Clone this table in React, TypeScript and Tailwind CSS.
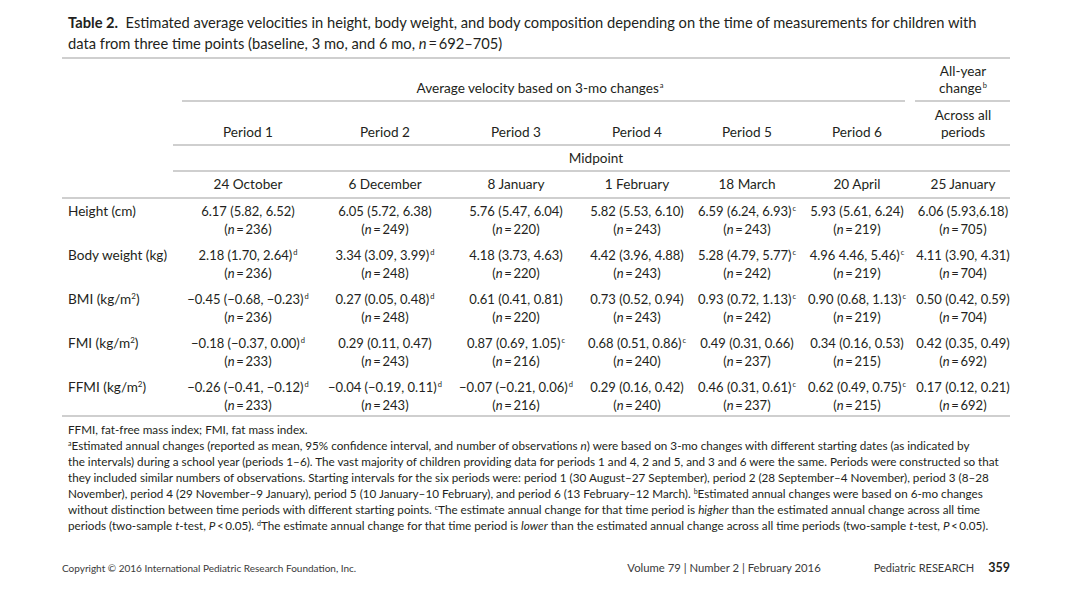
import React from "react";

const cols = "grid grid-cols-[118px_136px_138px_124px_118px_102px_118px_94px]";

type Cell = { v: string; s?: string; n: string };

const rows: { label: React.ReactNode; cells: Cell[] }[] = [
  {
    label: "Height (cm)",
    cells: [
      { v: "6.17 (5.82, 6.52)", n: "236" },
      { v: "6.05 (5.72, 6.38)", n: "249" },
      { v: "5.76 (5.47, 6.04)", n: "220" },
      { v: "5.82 (5.53, 6.10)", n: "243" },
      { v: "6.59 (6.24, 6.93)", s: "c", n: "243" },
      { v: "5.93 (5.61, 6.24)", n: "219" },
      { v: "6.06 (5.93,6.18)", n: "705" },
    ],
  },
  {
    label: "Body weight (kg)",
    cells: [
      { v: "2.18 (1.70, 2.64)", s: "d", n: "236" },
      { v: "3.34 (3.09, 3.99)", s: "d", n: "248" },
      { v: "4.18 (3.73, 4.63)", n: "220" },
      { v: "4.42 (3.96, 4.88)", n: "243" },
      { v: "5.28 (4.79, 5.77)", s: "c", n: "242" },
      { v: "4.96 4.46, 5.46)", s: "c", n: "219" },
      { v: "4.11 (3.90, 4.31)", n: "704" },
    ],
  },
  {
    label: (
      <>
        BMI (kg/m<sup className="text-[8px] relative -top-[5px]">2</sup>)
      </>
    ),
    cells: [
      { v: "\u22120.45 (\u22120.68, \u22120.23)", s: "d", n: "236" },
      { v: "0.27 (0.05, 0.48)", s: "d", n: "248" },
      { v: "0.61 (0.41, 0.81)", n: "220" },
      { v: "0.73 (0.52, 0.94)", n: "243" },
      { v: "0.93 (0.72, 1.13)", s: "c", n: "242" },
      { v: "0.90 (0.68, 1.13)", s: "c", n: "219" },
      { v: "0.50 (0.42, 0.59)", n: "704" },
    ],
  },
  {
    label: (
      <>
        FMI (kg/m<sup className="text-[8px] relative -top-[5px]">2</sup>)
      </>
    ),
    cells: [
      { v: "\u22120.18 (\u22120.37, 0.00)", s: "d", n: "233" },
      { v: "0.29 (0.11, 0.47)", n: "243" },
      { v: "0.87 (0.69, 1.05)", s: "c", n: "216" },
      { v: "0.68 (0.51, 0.86)", s: "c", n: "240" },
      { v: "0.49 (0.31, 0.66)", n: "237" },
      { v: "0.34 (0.16, 0.53)", n: "215" },
      { v: "0.42 (0.35, 0.49)", n: "692" },
    ],
  },
  {
    label: (
      <>
        FFMI (kg/m<sup className="text-[8px] relative -top-[5px]">2</sup>)
      </>
    ),
    cells: [
      { v: "\u22120.26 (\u22120.41, \u22120.12)", s: "d", n: "233" },
      { v: "\u22120.04 (\u22120.19, 0.11)", s: "d", n: "243" },
      { v: "\u22120.07 (\u22120.21, 0.06)", s: "d", n: "216" },
      { v: "0.29 (0.16, 0.42)", n: "240" },
      { v: "0.46 (0.31, 0.61)", s: "c", n: "237" },
      { v: "0.62 (0.49, 0.75)", s: "c", n: "215" },
      { v: "0.17 (0.12, 0.21)", n: "692" },
    ],
  },
];

const Rule = ({ className = "" }: { className?: string }) => (
  <div className={"h-[2px] bg-[#cfcfcf] " + className} />
);

const Sup = ({ children }: { children: React.ReactNode }) => (
  <sup className="text-[7.5px] relative -top-[5px] ml-[1px]">{children}</sup>
);

const FSup = ({ children }: { children: React.ReactNode }) => (
  <sup className="text-[7px] relative -top-[4px]">{children}</sup>
);

export default function App() {
  return (
    <div className="w-[1080px] h-[589px] bg-white text-[#231f20] font-['Lato',sans-serif] flex flex-col overflow-hidden">
      <div className="pl-[68px] pt-[12px] text-[14.7px] leading-[21px] whitespace-nowrap">
        <div>
          <span className="font-bold">Table 2.</span>&nbsp; Estimated average velocities in height, body weight, and body composition depending on the time of measurements for children with
        </div>
        <div>
          data from three time points (baseline, 3 mo, and 6 mo, <i>n</i>&thinsp;=&thinsp;692–705)
        </div>
      </div>

      <div className="ml-[62px] w-[948px] mt-[3px] text-[13.6px]">
        <Rule />
        {/* Row A */}
        <div className={cols + " h-[41px]"}>
          <div />
          <div className="col-span-6 flex items-end justify-center pb-[3px] leading-[17px] pr-[16px]">
            <span>
              Average velocity based on 3-mo changes<Sup>a</Sup>
            </span>
          </div>
          <div className="flex flex-col items-center justify-end pb-[3px] leading-[17px]">
            <span>All-year</span>
            <span>
              change<Sup>b</Sup>
            </span>
          </div>
        </div>
        <div className="flex">
          <Rule className="ml-[120px] w-[723px]" />
          <Rule className="ml-[10px] w-[95px]" />
        </div>
        {/* Row B */}
        <div className={cols + " h-[42px] leading-[17px]"}>
          <div />
          {["Period 1", "Period 2", "Period 3", "Period 4", "Period 5", "Period 6"].map((p) => (
            <div key={p} className="flex items-end justify-center pb-[3px]">
              {p}
            </div>
          ))}
          <div className="flex flex-col items-center justify-end pb-[3px]">
            <span>Across all</span>
            <span>periods</span>
          </div>
        </div>
        <Rule className="ml-[111px]" />
        <div className="h-[24px] flex items-center justify-center pl-[120px]">Midpoint</div>
        <Rule className="ml-[111px]" />
        {/* Row D */}
        <div className={cols + " h-[25px]"}>
          <div />
          {["24 October", "6 December", "8 January", "1 February", "18 March", "20 April", "25 January"].map((d) => (
            <div key={d} className="flex items-center justify-center">
              {d}
            </div>
          ))}
        </div>
        <Rule />
        {rows.map((r, i) => (
          <div key={i} className={cols + " leading-[18px] pt-[3px] " + (i === rows.length - 1 ? "pb-[1px]" : "pb-[5px]")}>
            <div className="pl-[6px] whitespace-nowrap">{r.label}</div>
            {r.cells.map((c, j) => (
              <div key={j} className="flex flex-col items-center whitespace-nowrap text-[13px]">
                <div className="flex justify-center w-full">
                  <span className="whitespace-nowrap">
                    {c.v}
                    {c.s && <Sup>{c.s}</Sup>}
                  </span>
                </div>
                <span>
                  (<i>n</i>&thinsp;=&thinsp;{c.n})
                </span>
              </div>
            ))}
          </div>
        ))}
        <Rule />
      </div>

      <div className="pl-[68px] pt-[4px] text-[11.7px] leading-[16px] whitespace-nowrap">
        <div>FFMI, fat-free mass index; FMI, fat mass index.</div>
        <div>
          <FSup>a</FSup>Estimated annual changes (reported as mean, 95% confidence interval, and number of observations <i>n</i>) were based on 3-mo changes with different starting dates (as indicated by
        </div>
        <div>
          the intervals) during a school year (periods 1–6). The vast majority of children providing data for periods 1 and 4, 2 and 5, and 3 and 6 were the same. Periods were constructed so that
        </div>
        <div>
          they included similar numbers of observations. Starting intervals for the six periods were: period 1 (30 August–27 September), period 2 (28 September–4 November), period 3 (8–28
        </div>
        <div>
          November), period 4 (29 November–9 January), period 5 (10 January–10 February), and period 6 (13 February–12 March). <FSup>b</FSup>Estimated annual changes were based on 6-mo changes
        </div>
        <div>
          without distinction between time periods with different starting points. <FSup>c</FSup>The estimate annual change for that time period is <i>higher</i> than the estimated annual change across all time
        </div>
        <div>
          periods (two-sample <i>t</i>-test, <i>P</i>&thinsp;&lt;&thinsp;0.05). <FSup>d</FSup>The estimate annual change for that time period is <i>lower</i> than the estimated annual change across all time periods (two-sample <i>t</i>-test, <i>P</i>&thinsp;&lt;&thinsp;0.05).
        </div>
      </div>

      <div className="mt-auto mb-[11px] flex items-center pl-[62px] pr-[70px] text-[#3a3a3a] text-[10px] whitespace-nowrap">
        <span>Copyright © 2016 International Pediatric Research Foundation, Inc.</span>
        <span className="ml-auto text-[11.3px]">Volume 79 | Number 2 | February 2016</span>
        <span className="ml-[53px] text-[11px]">Pediatric RESEARCH</span>
        <span className="ml-[14px] font-bold text-[12.5px] text-[#231f20]">359</span>
      </div>
    </div>
  );
}
